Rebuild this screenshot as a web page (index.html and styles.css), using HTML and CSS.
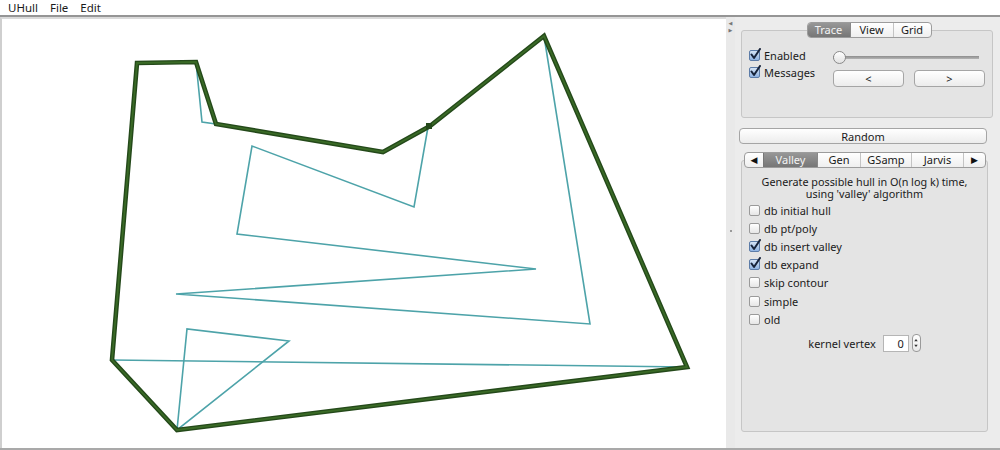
FILE: index.html
```html
<!DOCTYPE html>
<html>
<head>
    <title>UHull</title>
    <link rel="stylesheet" href="styles.css">
</head>
<body>

<!-- MENU -->
<div class="menubar">
    <span class="menu">UHull</span>
    <span class="menu">File</span>
    <span class="menu">Edit</span>
</div>

<div class="main">

    <!-- CANVAS -->
    <div class="canvas">
        <svg width="724" height="429" viewBox="2 19 724 429">
            <g class="poly">
                <polyline points="196,62 202,122 216,124"/>
                <polyline points="428,127 414,207 252,146 237,234 536,269 176,294 590,324 544,36"/>
                <line x1="112" y1="360" x2="687" y2="367"/>
                <polygon points="177,430 187,329 289,341"/>
            </g>
            <g class="hull">
                <polygon class="hull-out" points="112,360 177,430 687,367 544,36 430,126 383,152 216,124 196,62 137,63"/>
                <polygon class="hull-in" points="112,360 177,430 687,367 544,36 430,126 383,152 216,124 196,62 137,63"/>
                <rect x="426" y="123" width="6" height="6"/>
            </g>
        </svg>
    </div>

    <!-- SPLIT DIVIDER -->
    <div class="divider">
        <span class="arrow">&#9664;</span>
        <span class="arrow">&#9654;</span>
        <span class="grip"></span>
    </div>

    <!-- CONTROLS -->
    <div class="panel">

        <div class="tabs tabs-trace">
            <span class="tab selected">Trace</span>
            <span class="tab">View</span>
            <span class="tab">Grid</span>
        </div>
        <div class="group group-trace">
            <div class="checks">
                <div class="check"><span class="box on"><svg width="13" height="13" viewBox="0 0 13 13"><path d="M2.5 6.5 L5 10 L11 1"/></svg></span>Enabled</div>
                <div class="check"><span class="box on"><svg width="13" height="13" viewBox="0 0 13 13"><path d="M2.5 6.5 L5 10 L11 1"/></svg></span>Messages</div>
            </div>
            <div class="controls">
                <div class="slider"><span class="knob"></span></div>
                <div class="steps">
                    <span class="btn step">&lt;</span>
                    <span class="btn step">&gt;</span>
                </div>
            </div>
        </div>

        <span class="btn random">Random</span>

        <div class="tabs tabs-algo">
            <span class="tab scroll">&#9664;</span>
            <span class="tab selected">Valley</span>
            <span class="tab">Gen</span>
            <span class="tab">GSamp</span>
            <span class="tab">Jarvis</span>
            <span class="tab scroll">&#9654;</span>
        </div>
        <div class="group group-algo">
            <div class="desc">
                <div class="desc-line">Generate possible hull in O(n log k) time,</div>
                <div class="desc-line">using 'valley' algorithm</div>
            </div>
            <div class="list">
                <div class="check"><span class="box"></span>db initial hull</div>
                <div class="check"><span class="box"></span>db pt/poly</div>
                <div class="check"><span class="box on"><svg width="13" height="13" viewBox="0 0 13 13"><path d="M2.5 6.5 L5 10 L11 1"/></svg></span>db insert valley</div>
                <div class="check"><span class="box on"><svg width="13" height="13" viewBox="0 0 13 13"><path d="M2.5 6.5 L5 10 L11 1"/></svg></span>db expand</div>
                <div class="check"><span class="box"></span>skip contour</div>
                <div class="check"><span class="box"></span>simple</div>
                <div class="check"><span class="box"></span>old</div>
            </div>
            <div class="kernel">
                <span>kernel vertex</span>
                <span class="field">0</span>
                <span class="spinner">
                    <svg width="9" height="18" viewBox="0 0 9 18">
                        <path d="M2.5 7 L4.5 4.5 L6.5 7 Z"/>
                        <path d="M2.5 11 L4.5 13.5 L6.5 11 Z"/>
                    </svg>
                </span>
            </div>
        </div>

    </div>
</div>

</body>
</html>
```

FILE: styles.css
```css
body {
    margin: 0;
    font-family: "Noto Sans", "DejaVu Sans", sans-serif;
    font-size: 11px;
    color: #1a1a1a;
    background: #ececec;
    height: 450px;
    overflow: hidden;
}

/* menu bar */
.menubar {
    height: 15px;
    line-height: 15px;
    background: #fff;
    border-bottom: 2px solid #959595;
    padding-left: 8px;
    display: flex;
    gap: 12px;
}

.menu {
    font-size: 11.5px;
}

.main {
    display: flex;
    height: 431px;
    border-bottom: 2px solid #a9a9a9;
}

/* drawing area */
.canvas {
    width: 724px;
    height: 429px;
    background: #fff;
    border-top: 2px solid #dadada;
    border-left: 2px solid #cfcfcf;
}

.canvas svg {
    display: block;
}

.poly {
    fill: none;
    stroke: #4da3a9;
    stroke-width: 1.6;
}

.hull polygon {
    fill: none;
    stroke-linejoin: miter;
}

.hull-out {
    stroke: #24491a;
    stroke-width: 4.6;
}

.hull-in {
    stroke: #3a6a26;
    stroke-width: 1.8;
}

.hull rect {
    fill: #24491a;
}

/* split divider */
.divider {
    width: 9px;
    background: #e9e9e9;
    display: flex;
    flex-direction: column;
    align-items: center;
    padding-top: 3px;
    box-sizing: border-box;
}

.arrow {
    font-size: 5px;
    line-height: 7px;
    color: #777;
}

.grip {
    width: 2px;
    height: 2px;
    background: #999;
    margin-top: 196px;
}

/* right panel */
.panel {
    flex: 1;
    display: flex;
    flex-direction: column;
    padding-top: 5px;
    background: #ececec;
}

.tabs {
    display: flex;
    align-self: center;
    height: 16px;
    border: 1px solid #9c9c9c;
    border-radius: 4px;
    overflow: hidden;
    background: linear-gradient(#ffffff, #efefef);
    position: relative;
    box-sizing: border-box;
}

.tab {
    display: flex;
    align-items: center;
    justify-content: center;
    border-left: 1px solid #c4c4c4;
    font-size: 11px;
    line-height: 14px;
}

.tab:first-child {
    border-left: none;
}

.tab.selected {
    background: linear-gradient(#979797, #767676);
    color: #f4f4f4;
    border-left-color: #777;
}

.tab.selected + .tab {
    border-left-color: #888;
}

.tabs-trace {
    margin-left: 3px;
    margin-bottom: -8px;
}

.tabs-trace .tab:nth-child(1) { width: 42px; }
.tabs-trace .tab:nth-child(2) { width: 42px; }
.tabs-trace .tab:nth-child(3) { width: 37px; }

.group {
    background: #e4e4e4;
    border: 1px solid #c6c6c6;
    border-radius: 3px;
    box-sizing: border-box;
}

.group-trace {
    margin: 0 7px 0 6px;
    height: 88px;
    padding: 16px 0 0 7px;
    display: flex;
}

.checks {
    width: 84px;
    display: flex;
    flex-direction: column;
}

.check {
    display: flex;
    align-items: center;
    gap: 4px;
    height: 17px;
    white-space: nowrap;
}

.box {
    width: 11px;
    height: 11px;
    box-sizing: border-box;
    border: 1px solid #9a9a9a;
    border-radius: 2px;
    background: linear-gradient(#ffffff, #e6e6e6);
    position: relative;
    flex: none;
}

.box.on {
    border-color: #5c7ca8;
    background: linear-gradient(#d4e3f5, #8fb3e2);
}

.box svg {
    position: absolute;
    left: -1px;
    top: -3px;
}

.box path {
    fill: none;
    stroke: #17233a;
    stroke-width: 2;
    stroke-linecap: round;
    stroke-linejoin: round;
}

.controls {
    width: 152px;
    display: flex;
    flex-direction: column;
    padding-top: 3px;
}

.slider {
    width: 146px;
    height: 14px;
    display: flex;
    align-items: center;
    background: linear-gradient(transparent 6px, #8d8d8d 6px, #b4b4b4 9px, transparent 9px);
    border-radius: 2px;
}

.knob {
    width: 13px;
    height: 13px;
    box-sizing: border-box;
    border: 1px solid #8a8a8a;
    border-radius: 50%;
    background: linear-gradient(#ffffff, #e2e2e2);
}

.steps {
    display: flex;
    gap: 10px;
    margin-top: 6px;
}

.btn {
    display: flex;
    align-items: center;
    justify-content: center;
    box-sizing: border-box;
    border: 1px solid #a5a5a5;
    border-radius: 4px;
    background: linear-gradient(#ffffff, #ececec);
    font-size: 11px;
}

.step {
    width: 71px;
    height: 17px;
}

.random {
    margin: 10px 0 0 4px;
    width: 248px;
    height: 16px;
}

.tabs-algo {
    margin-top: 8px;
    margin-bottom: -8px;
    align-self: flex-start;
    margin-left: 9px;
}

.tabs-algo .tab:nth-child(1) { width: 18px; }
.tabs-algo .tab:nth-child(2) { width: 53px; }
.tabs-algo .tab:nth-child(3) { width: 42px; }
.tabs-algo .tab:nth-child(4) { width: 50px; }
.tabs-algo .tab:nth-child(5) { width: 51px; }
.tabs-algo .tab:nth-child(6) { width: 21px; }

.tab.scroll {
    font-size: 9px;
    color: #111;
}

.group-algo {
    margin: 0 12px 0 6px;
    height: 272px;
    padding: 14px 0 0 7px;
}

.desc {
    text-align: center;
    margin-left: -7px;
    font-size: 10.8px;
}

.desc-line {
    height: 12px;
    line-height: 13px;
}

.list {
    margin-top: 2px;
    display: flex;
    flex-direction: column;
}

.list .check {
    height: 18.2px;
}

.kernel {
    display: flex;
    align-items: center;
    justify-content: center;
    margin: 6px 0 0 -7px;
    height: 18px;
}

.field {
    width: 26px;
    height: 17px;
    box-sizing: border-box;
    margin-left: 7px;
    border: 1px solid #b5b5b5;
    background: #fff;
    text-align: right;
    padding-right: 4px;
    line-height: 15px;
}

.spinner {
    margin-left: 3px;
    width: 9px;
    height: 18px;
    box-sizing: border-box;
    border: 1px solid #9a9a9a;
    border-radius: 4px;
    background: linear-gradient(#ffffff, #e8e8e8);
    display: flex;
}

.spinner svg {
    margin-left: -1px;
    margin-top: -1px;
}

.spinner path {
    fill: #333;
}
```
